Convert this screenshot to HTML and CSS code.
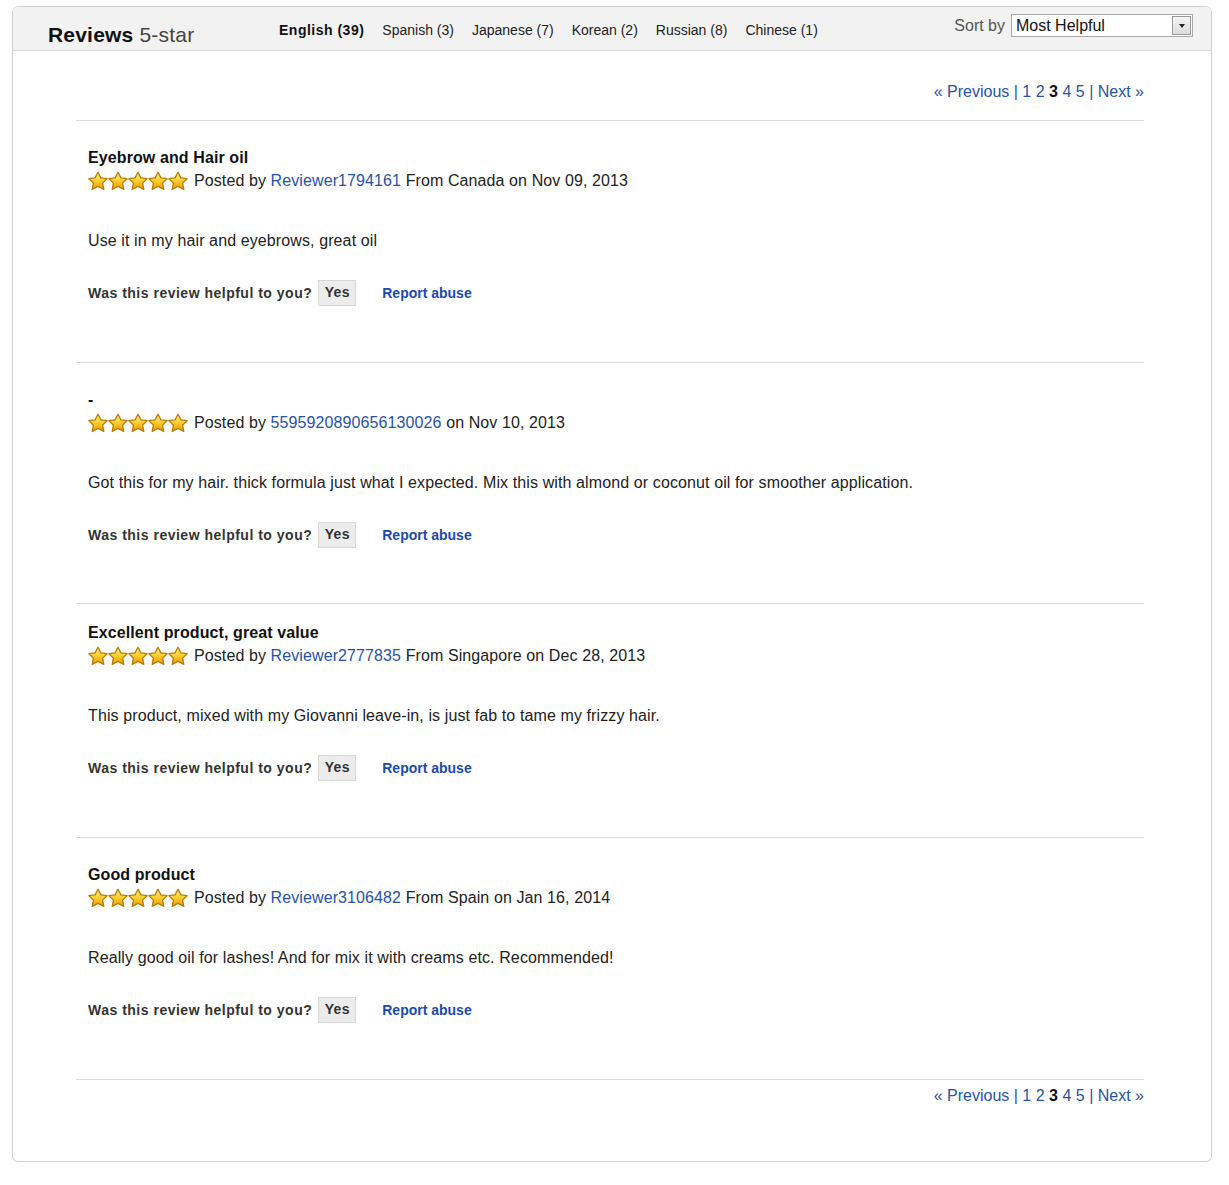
FILE: index.html
```html
<!DOCTYPE html>
<html lang="en">
<head>
<meta charset="utf-8">
<title>Reviews 5-star</title>
<link rel="stylesheet" href="styles.css">
</head>
<body>
<svg class="defs" width="0" height="0" aria-hidden="true">
  <defs>
    <linearGradient id="starFill" x1="0" y1="0" x2="0" y2="1">
      <stop offset="0" stop-color="#fff1a0"/>
      <stop offset="0.45" stop-color="#fcd232"/>
      <stop offset="1" stop-color="#ee9a00"/>
    </linearGradient>
    <symbol id="star" viewBox="0 0 20 20">
      <polygon points="10,1.2 12.9,6.9 19.1,7.7 14.6,12.1 15.8,18.4 10,15.4 4.2,18.4 5.4,12.1 0.9,7.7 7.1,6.9" fill="url(#starFill)" stroke="#b87c08" stroke-width="1.3" stroke-linejoin="round"/>
    </symbol>
  </defs>
</svg>

<div class="page">
  <div class="panel">
    <div class="panel-head">
      <h2 class="title"><b>Reviews</b> 5-star</h2>
      <ul class="langs">
        <li class="lang lang--active">English (39)</li>
        <li class="lang">Spanish (3)</li>
        <li class="lang">Japanese (7)</li>
        <li class="lang">Korean (2)</li>
        <li class="lang">Russian (8)</li>
        <li class="lang">Chinese (1)</li>
      </ul>
      <div class="sort">
        <span class="sort-label">Sort by</span>
        <div class="select">
          <span class="select-value">Most Helpful</span>
          <span class="select-btn"><span class="caret"></span></span>
        </div>
      </div>
    </div>

    <div class="panel-body">
      <div class="pager pager--top">
        <a href="#">« Previous</a> <span class="sep">|</span> <a href="#">1</a> <a href="#">2</a> <b class="current">3</b> <a href="#">4</a> <a href="#">5</a> <span class="sep">|</span> <a href="#">Next »</a>
      </div>

      <div class="review">
        <div class="review-title">Eyebrow and Hair oil</div>
        <div class="review-meta">
          <span class="stars"><svg class="star"><use href="#star"/></svg><svg class="star"><use href="#star"/></svg><svg class="star"><use href="#star"/></svg><svg class="star"><use href="#star"/></svg><svg class="star"><use href="#star"/></svg></span>
          <span>Posted by <a href="#">Reviewer1794161</a> From Canada on Nov 09, 2013</span>
        </div>
        <p class="review-text">Use it in my hair and eyebrows, great oil</p>
        <div class="helpful">
          <span class="helpful-q">Was this review helpful to you?</span>
          <button class="yes">Yes</button>
          <a class="report" href="#">Report abuse</a>
        </div>
      </div>

      <div class="review">
        <div class="review-title">-</div>
        <div class="review-meta">
          <span class="stars"><svg class="star"><use href="#star"/></svg><svg class="star"><use href="#star"/></svg><svg class="star"><use href="#star"/></svg><svg class="star"><use href="#star"/></svg><svg class="star"><use href="#star"/></svg></span>
          <span>Posted by <a href="#">5595920890656130026</a> on Nov 10, 2013</span>
        </div>
        <p class="review-text">Got this for my hair. thick formula just what I expected. Mix this with almond or coconut oil for smoother application.</p>
        <div class="helpful">
          <span class="helpful-q">Was this review helpful to you?</span>
          <button class="yes">Yes</button>
          <a class="report" href="#">Report abuse</a>
        </div>
      </div>

      <div class="review review--tight">
        <div class="review-title">Excellent product, great value</div>
        <div class="review-meta">
          <span class="stars"><svg class="star"><use href="#star"/></svg><svg class="star"><use href="#star"/></svg><svg class="star"><use href="#star"/></svg><svg class="star"><use href="#star"/></svg><svg class="star"><use href="#star"/></svg></span>
          <span>Posted by <a href="#">Reviewer2777835</a> From Singapore on Dec 28, 2013</span>
        </div>
        <p class="review-text">This product, mixed with my Giovanni leave-in, is just fab to tame my frizzy hair.</p>
        <div class="helpful">
          <span class="helpful-q">Was this review helpful to you?</span>
          <button class="yes">Yes</button>
          <a class="report" href="#">Report abuse</a>
        </div>
      </div>

      <div class="review">
        <div class="review-title">Good product</div>
        <div class="review-meta">
          <span class="stars"><svg class="star"><use href="#star"/></svg><svg class="star"><use href="#star"/></svg><svg class="star"><use href="#star"/></svg><svg class="star"><use href="#star"/></svg><svg class="star"><use href="#star"/></svg></span>
          <span>Posted by <a href="#">Reviewer3106482</a> From Spain on Jan 16, 2014</span>
        </div>
        <p class="review-text">Really good oil for lashes! And for mix it with creams etc. Recommended!</p>
        <div class="helpful">
          <span class="helpful-q">Was this review helpful to you?</span>
          <button class="yes">Yes</button>
          <a class="report" href="#">Report abuse</a>
        </div>
      </div>

      <div class="pager pager--bottom">
        <a href="#">« Previous</a> <span class="sep">|</span> <a href="#">1</a> <a href="#">2</a> <b class="current">3</b> <a href="#">4</a> <a href="#">5</a> <span class="sep">|</span> <a href="#">Next »</a>
      </div>
    </div>
  </div>
</div>
</body>
</html>
```

FILE: styles.css
```css
* { box-sizing: border-box; }

html, body {
  margin: 0;
  padding: 0;
  background: #fff;
}

body {
  font-family: "Liberation Sans", Arial, sans-serif;
  color: #222;
}

.defs {
  position: absolute;
  width: 0;
  height: 0;
  overflow: hidden;
}

a {
  color: #2653a6;
  text-decoration: none;
}

.page {
  padding: 6px 0 0 12px;
}

.panel {
  width: 1200px;
  height: 1156px;
  border: 1px solid #cfcfcf;
  border-radius: 6px;
  box-shadow: 0 1px 1px rgba(0,0,0,0.04);
  overflow: hidden;
}

/* ---------- header ---------- */
.panel-head {
  display: flex;
  align-items: flex-start;
  height: 44px;
  background: #f2f2f2;
  border-bottom: 1px solid #d6d6d6;
  padding: 0 18px 0 35px;
}

.title {
  flex: 0 0 231px;
  margin: 15px 0 0;
  font-size: 21px;
  line-height: 25px;
  font-weight: normal;
  color: #444;
  letter-spacing: 0.2px;
}

.title b {
  color: #111;
  font-weight: bold;
}

.langs {
  display: flex;
  gap: 18px;
  list-style: none;
  margin: 15px 0 0;
  padding: 0;
  font-size: 14px;
  line-height: 17px;
  color: #222;
}

.lang--active {
  font-weight: bold;
  color: #111;
  letter-spacing: 0.5px;
}

.sort {
  margin-left: auto;
  display: flex;
  align-items: center;
  gap: 6px;
  margin-top: 7px;
}

.sort-label {
  font-size: 16px;
  color: #555;
}

.select {
  display: flex;
  align-items: center;
  width: 182px;
  height: 23px;
  border: 1px solid #a9a9a9;
  background: #fff;
  padding: 0 1px 0 4px;
}

.select-value {
  flex: 1;
  font-size: 16px;
  line-height: 19px;
  color: #111;
}

.select-btn {
  width: 19px;
  height: 19px;
  border: 1px solid #9a9a9a;
  background: linear-gradient(#f6f6f6, #dcdcdc);
  display: flex;
  align-items: center;
  justify-content: center;
}

.caret {
  width: 0;
  height: 0;
  border-left: 3px solid transparent;
  border-right: 3px solid transparent;
  border-top: 4px solid #222;
}

/* ---------- body ---------- */
.panel-body {
  margin: 0 67px 0 63px;
}

.pager {
  text-align: right;
  font-size: 16px;
  line-height: 20px;
  color: #2653a6;
}

.pager .current {
  color: #111;
}

.pager--top {
  padding: 31px 0 18px;
  border-bottom: 1px solid #d9d9d9;
}

.pager--bottom {
  padding-top: 6px;
}

.review {
  padding: 27px 12px 55.7px;
  border-bottom: 1px solid #d9d9d9;
}

.review--tight {
  padding-top: 19px;
}

.review-title {
  font-size: 16px;
  line-height: 20px;
  font-weight: bold;
  color: #111;
  letter-spacing: 0.1px;
}

.review-meta {
  display: flex;
  align-items: center;
  gap: 6px;
  height: 22px;
  margin-top: 2px;
  font-size: 16px;
  color: #222;
  letter-spacing: 0.1px;
}

.stars {
  display: flex;
}

.star {
  width: 20px;
  height: 20px;
  display: block;
}

.review-text {
  margin: 39px 0 0;
  font-size: 16px;
  line-height: 20px;
  color: #222;
  letter-spacing: 0.11px;
}

.helpful {
  display: flex;
  align-items: center;
  margin-top: 29px;
  font-size: 14px;
  font-weight: bold;
  color: #333;
}

.helpful-q {
  letter-spacing: 0.5px;
}

.yes {
  margin-left: 6px;
  width: 38px;
  height: 26px;
  padding: 0 0 3px;
  border: 1px solid #d8d8d8;
  background: #ececec;
  font-family: inherit;
  font-size: 14px;
  font-weight: bold;
  color: #333;
  line-height: 22px;
  text-align: center;
  letter-spacing: 0.3px;
}

.report {
  margin-left: 26px;
  color: #1b4ba8;
  font-weight: bold;
}
```
